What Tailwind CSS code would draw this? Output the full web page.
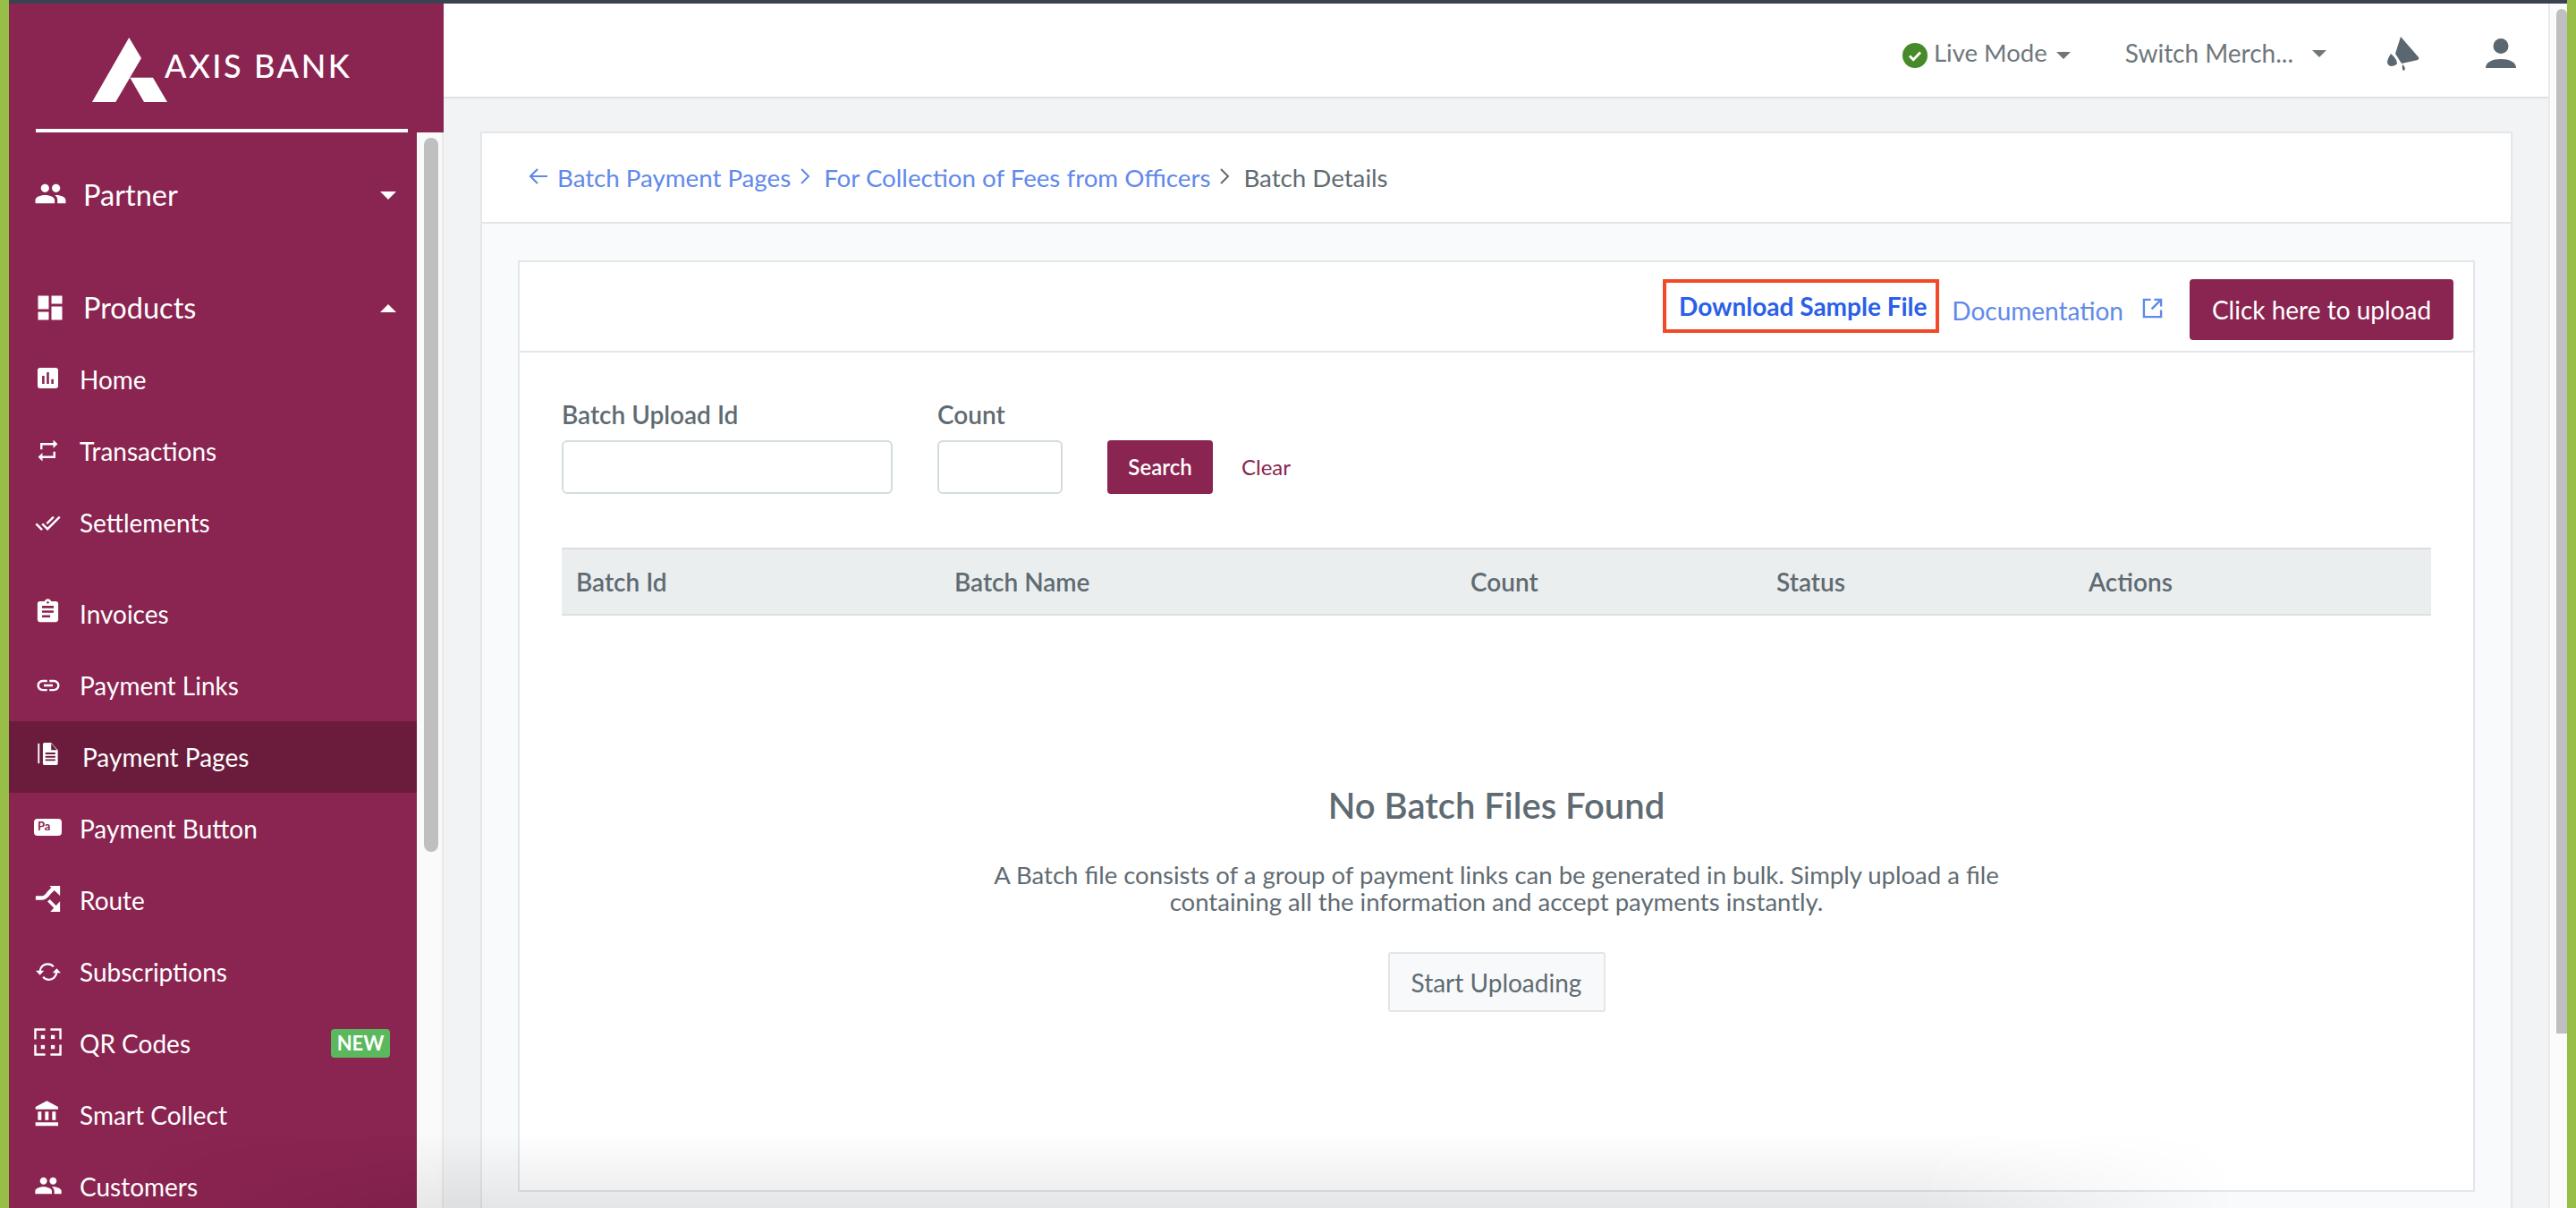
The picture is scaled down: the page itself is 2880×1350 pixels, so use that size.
<!DOCTYPE html>
<html lang="en">
<head>
  <meta charset="UTF-8">
  <title>Batch Details</title>
  <script src="https://cdn.jsdelivr.net/npm/@tailwindcss/browser@4"></script>
</head>
<body class="relative w-[2880px] h-[1350px] overflow-hidden flex bg-[#f1f3f5] font-['Lato',sans-serif] text-[28px] text-[#5f6b72]">
  <div class="w-[10px] shrink-0 bg-[#97bf48]"></div>

  <div class="flex-1 min-w-0 flex flex-col">
    <div class="h-[4px] shrink-0 bg-[#3a4252]"></div>
    <div class="flex-1 min-h-0 flex">

      <!-- sidebar -->
      <aside class="w-[486px] shrink-0 flex flex-col">
        <div class="h-[140px] shrink-0 bg-[#8a2450] flex">
          <svg class="ml-[93px] mt-[38px] w-[90px] h-[76px]" viewBox="0 0 90 76" fill="#fff">
            <polygon points="41.3,0 55,23 26.3,72 0,72"/>
            <polygon points="42.3,44.7 68,44.7 84,72 58,72"/>
          </svg>
          <span class="mt-[47px] -ml-[9px] h-[44px] leading-[44px] text-[36px] font-medium tracking-[2.6px] text-white whitespace-nowrap">AXIS BANK</span>
        </div>
        <div class="h-[4px] shrink-0 bg-[#8a2450] pr-[40px] pl-[30px]"><div class="h-full bg-white"></div></div>
        <div class="flex-1 min-h-0 flex">
          <nav class="w-[456px] shrink-0 bg-[#8a2450] text-white overflow-hidden">
            <a class="mt-[30px] h-[80px] flex items-center pl-[16px] pr-[23px] text-[32.5px]">
              <span class="w-[60px] flex justify-center"><svg class="w-[37px] h-[37px] -mt-[4px]" viewBox="0 0 24 24" fill="#fff"><path d="M16 11c1.66 0 2.99-1.34 2.99-3S17.66 5 16 5c-1.66 0-3 1.34-3 3s1.34 3 3 3zm-8 0c1.66 0 2.99-1.34 2.99-3S9.66 5 8 5C6.34 5 5 6.34 5 8s1.34 3 3 3zm0 2c-2.33 0-7 1.17-7 3.5V19h14v-2.5c0-2.33-4.67-3.5-7-3.5zm8 0c-.29 0-.62.02-.97.05 1.16.84 1.97 1.97 1.97 3.45V19h6v-2.5c0-2.33-4.67-3.5-7-3.5z"/></svg></span>
              <span class="ml-[7px]">Partner</span>
              <span class="ml-auto w-0 h-0 border-x-[9px] border-x-transparent border-t-[9px] border-t-white"></span>
            </a>
            <a class="mt-[46px] h-[80px] flex items-center pl-[16px] pr-[23px] text-[32.5px]">
              <span class="w-[60px] flex justify-center"><svg class="w-[36px] h-[36px]" viewBox="0 0 24 24" fill="#fff"><path d="M3 13h8V3H3v10zm0 8h8v-6H3v6zm10 0h8V11h-8v10zm0-18v6h8V3h-8z"/></svg></span>
              <span class="ml-[7px]">Products</span>
              <span class="ml-auto w-0 h-0 border-x-[9px] border-x-transparent border-b-[9px] border-b-white"></span>
            </a>
            <a class="h-[80px] flex items-center pl-[16px]">
              <span class="w-[55px] flex justify-center"><svg class="w-[23px] h-[23px] -mt-[3px]" viewBox="3 3 18 18" fill="#fff"><path d="M19 3H5c-1.1 0-2 .9-2 2v14c0 1.1.9 2 2 2h14c1.1 0 2-.9 2-2V5c0-1.1-.9-2-2-2zM9 17H7v-7h2v7zm4 0h-2V7h2v10zm4 0h-2v-4h2v4z"/></svg></span>
              <span class="ml-[8px]">Home</span>
            </a>
            <a class="h-[80px] flex items-center pl-[16px]">
              <span class="w-[55px] flex justify-center"><svg class="w-[29px] h-[29px] -mt-[2px]" viewBox="0 0 24 24" fill="#fff"><path d="M7 7h10v3l4-4-4-4v3H5v6h2V7zm10 10H7v-3l-4 4 4 4v-3h12v-6h-2v4z"/></svg></span>
              <span class="ml-[8px]">Transactions</span>
            </a>
            <a class="h-[80px] flex items-center pl-[16px]">
              <span class="w-[55px] flex justify-center"><svg class="w-[29px] h-[29px]" viewBox="0 0 24 24" fill="#fff"><path d="M18 7l-1.41-1.41-6.34 6.34 1.41 1.41L18 7zm4.24-1.41L11.66 16.17 7.48 12l-1.41 1.41L11.66 19l12-12-1.42-1.41zM.41 13.41L6 19l1.41-1.41L1.83 12 .41 13.41z"/></svg></span>
              <span class="ml-[8px]">Settlements</span>
            </a>
            <a class="mt-[22px] h-[80px] flex items-center pl-[16px]">
              <span class="w-[55px] flex justify-center"><svg class="w-[31px] h-[31px] -mt-[6px]" viewBox="0 0 24 24" fill="#fff"><path d="M19 3h-4.18C14.4 1.84 13.3 1 12 1c-1.3 0-2.4.84-2.82 2H5c-1.1 0-2 .9-2 2v14c0 1.1.9 2 2 2h14c1.1 0 2-.9 2-2V5c0-1.1-.9-2-2-2zm-7 0c.55 0 1 .45 1 1s-.45 1-1 1-1-.45-1-1 .45-1 1-1zm2 14H7v-2h7v2zm3-4H7v-2h10v2zm0-4H7V7h10v2z"/></svg></span>
              <span class="ml-[8px]">Invoices</span>
            </a>
            <a class="h-[80px] flex items-center pl-[16px]">
              <span class="w-[55px] flex justify-center"><svg class="w-[30px] h-[30px]" viewBox="0 0 24 24" fill="#fff"><path d="M3.9 12c0-1.71 1.39-3.1 3.1-3.1h4V7H7c-2.76 0-5 2.24-5 5s2.24 5 5 5h4v-1.9H7c-1.71 0-3.1-1.39-3.1-3.1zM8 13h8v-2H8v2zm9-6h-4v1.9h4c1.71 0 3.1 1.39 3.1 3.1s-1.39 3.1-3.1 3.1h-4V17h4c2.76 0 5-2.24 5-5s-2.24-5-5-5z"/></svg></span>
              <span class="ml-[8px]">Payment Links</span>
            </a>
            <a class="h-[80px] flex items-center pl-[16px] bg-[#6b1c3c]">
              <span class="w-[55px] flex justify-center"><svg class="w-[23px] h-[26px] -mt-[8px]" viewBox="0 0 24 28" fill="#fff">
                <rect x="0" y="2" width="2" height="24"/>
                <path fill-rule="evenodd" d="M6 3a2 2 0 0 1 2-2h8l8 9v16a2 2 0 0 1-2 2H8a2 2 0 0 1-2-2zM16 2v8h7zM9 13h12v2H9zM9 17h12v2H9zM9 21h12v2H9z"/>
              </svg></span>
              <span class="ml-[11px]">Payment Pages</span>
            </a>
            <a class="h-[80px] flex items-center pl-[16px]">
              <span class="w-[55px] flex justify-center"><span class="w-[31px] h-[19px] bg-white rounded-[4px] text-[#8a2450] text-[13px] leading-[17px] font-bold pl-[4px] -mt-[3px]">Pa</span></span>
              <span class="ml-[8px]">Payment Button</span>
            </a>
            <a class="h-[80px] flex items-center pl-[16px]">
              <span class="w-[55px] flex justify-center"><svg class="w-[29px] h-[29px] -mt-[3px]" viewBox="0 0 32 32" fill="none" stroke="#fff">
                <path stroke-width="5" d="M1 15h7c5 0 7-3 9-6l6-6"/>
                <path fill="#fff" stroke="none" d="M18 0h13v12z"/>
                <path stroke-width="4" d="M17 18l9 9"/>
                <path fill="#fff" stroke="none" d="M31 19v13H19z"/>
              </svg></span>
              <span class="ml-[8px]">Route</span>
            </a>
            <a class="h-[80px] flex items-center pl-[16px]">
              <span class="w-[55px] flex justify-center"><svg class="w-[30px] h-[30px]" viewBox="0 0 24 24" fill="none" stroke="#fff" stroke-width="1.8">
                <path d="M4.5 11.5C5 7.5 8 5 11.5 5c2.2 0 4 .9 5.2 2.4"/>
                <path d="M19.5 12.5C19 16.5 16 19 12.5 19c-2.2 0-4-.9-5.2-2.4"/>
                <path fill="#fff" stroke="none" d="M.8 11h7.4l-3.7 4zM15.8 13h7.4l-3.7-4z"/>
              </svg></span>
              <span class="ml-[8px]">Subscriptions</span>
            </a>
            <a class="h-[80px] flex items-center pl-[16px] pr-[30px]">
              <span class="w-[55px] flex justify-center"><svg class="w-[31px] h-[31px] -mt-[3px]" viewBox="0 0 32 32" fill="none" stroke="#fff" stroke-width="2.5">
                <path d="M13 1.5H1.5V13M19 1.5h11.5V13M13 30.5H1.5V19M19 30.5h11.5V19"/>
                <rect x="8" y="8" width="4.5" height="4.5" fill="#fff" stroke="none"/>
                <rect x="19.5" y="8" width="4.5" height="4.5" fill="#fff" stroke="none"/>
                <rect x="8" y="19.5" width="4.5" height="4.5" fill="#fff" stroke="none"/>
                <rect x="19.5" y="19.5" width="4.5" height="4.5" fill="#fff" stroke="none"/>
              </svg></span>
              <span class="ml-[8px]">QR Codes</span>
              <span class="ml-auto w-[66px] h-[32px] rounded-[4px] bg-[#5cb85c] text-[22px] leading-[32px] font-bold text-center">NEW</span>
            </a>
            <a class="h-[80px] flex items-center pl-[16px]">
              <span class="w-[55px] flex justify-center"><svg class="w-[32px] h-[32px] -mt-[3px] -ml-[2px]" viewBox="0 0 24 24" fill="#fff"><path d="M4 10v7h3v-7H4zm6 0v7h3v-7h-3zM2 22h19v-3H2v3zm14-12v7h3v-7h-3zm-4.5-9L2 6v2h19V6l-9.5-5z"/></svg></span>
              <span class="ml-[8px]">Smart Collect</span>
            </a>
            <a class="h-[80px] flex items-center pl-[16px]">
              <span class="w-[55px] flex justify-center"><svg class="w-[32px] h-[32px] -mt-[2px]" viewBox="0 0 24 24" fill="#fff"><path d="M16 11c1.66 0 2.99-1.34 2.99-3S17.66 5 16 5c-1.66 0-3 1.34-3 3s1.34 3 3 3zm-8 0c1.66 0 2.99-1.34 2.99-3S9.66 5 8 5C6.34 5 5 6.34 5 8s1.34 3 3 3zm0 2c-2.33 0-7 1.17-7 3.5V19h14v-2.5c0-2.33-4.67-3.5-7-3.5zm8 0c-.29 0-.62.02-.97.05 1.16.84 1.97 1.97 1.97 3.45V19h6v-2.5c0-2.33-4.67-3.5-7-3.5z"/></svg></span>
              <span class="ml-[8px]">Customers</span>
            </a>
          </nav>
          <div class="w-[30px] shrink-0 bg-[#fafafa] border-r-2 border-r-[#e9e9e9] pl-[8px] pt-[6px]">
            <div class="w-[16px] h-[798px] rounded-full bg-[#bfbfbf]"></div>
          </div>
        </div>
      </aside>

      <!-- main -->
      <div class="flex-1 min-w-0 flex flex-col">
        <header class="h-[106px] shrink-0 bg-white border-b-2 border-b-[#dfe2e4] flex items-center pt-[6px] text-[#6f777c]">
          <svg class="ml-[1631px] w-[28px] h-[28px] mt-[6px]" viewBox="0 0 28 28">
            <circle cx="14" cy="14" r="14" fill="#478a2a"/>
            <path d="M8 14.5l4.2 4.2L20 10.5" fill="none" stroke="#fff" stroke-width="2.8"/>
          </svg>
          <span class="ml-[7px] text-[27.5px]">Live Mode</span>
          <span class="ml-[10px] mt-[6px] w-0 h-0 border-x-[8px] border-x-transparent border-t-[8px] border-t-[#6f777c]"></span>
          <span class="ml-[61px]">Switch Merch...</span>
          <span class="ml-[21px] mt-[1px] w-0 h-0 border-x-[8px] border-x-transparent border-t-[8px] border-t-[#6f777c]"></span>
          <svg class="ml-[66px] w-[40px] h-[40px]" viewBox="0 0 40 40" fill="#5b6770">
            <path d="M17 2L37 25q1 2-1 3L18 32L11 21z"/>
            <path d="M6 21q-4 6-4 10q1 4 5 4q5-1 6-3q0-5-7-11z"/>
            <path d="M19 33q3 2 3 5q-1 2-2 2q-2-2-1-7z"/>
          </svg>
          <svg class="ml-[72px] w-[34px] h-[33px]" viewBox="0 0 34 33" fill="#5b6770">
            <circle cx="17" cy="8.5" r="8.5"/>
            <path d="M0 33c0-7 8-10 17-10s17 3 17 10z"/>
          </svg>
        </header>

        <main class="flex-1 min-h-0 pt-[37px] pl-[41px] pr-[40px] overflow-hidden">
          <div class="border-2 border-[#e3e7ea] border-b-0 bg-[#f8fafb] h-[1204px]">
            <div class="h-[101px] bg-white border-b-2 border-b-[#e3e7ea] pl-[51px] flex items-center text-[27.7px] text-[#6189ea]">
              <svg class="w-[24px] h-[24px] -mt-[3px]" viewBox="0 0 24 24" fill="none" stroke="#6189ea" stroke-width="2.2"><path d="M22 12H3M11 4l-8 8 8 8"/></svg>
              <span class="ml-[9px]">Batch Payment Pages</span>
              <svg class="ml-[10px] w-[12px] h-[18px] -mt-[4px]" viewBox="0 0 12 18" fill="none" stroke="#6189ea" stroke-width="2"><path d="M2 1l8 8-8 8"/></svg>
              <span class="ml-[15px]">For Collection of Fees from Officers</span>
              <svg class="ml-[10px] w-[12px] h-[18px] -mt-[4px]" viewBox="0 0 12 18" fill="none" stroke="#5f6b72" stroke-width="2"><path d="M2 1l8 8-8 8"/></svg>
              <span class="ml-[15px] text-[#5f6b72]">Batch Details</span>
            </div>

            <div class="mt-[41px] mx-[40px] border-2 border-[#e3e7ea] bg-white h-[1041px]">
              <div class="h-[101px] border-b-2 border-b-[#e3e7ea] flex items-center justify-end pr-[22px]">
                <a class="w-[309px] h-[60px] -mt-[2px] border-[4px] border-[#f04a26] pl-[4px] flex items-center justify-center font-bold text-[#2a5fe8] whitespace-nowrap">Download Sample File</a>
                <a class="ml-[14px] mt-[8px] text-[#6189ea]">Documentation</a>
                <svg class="ml-[21px] mt-[4px] w-[23px] h-[23px]" viewBox="0 0 24 24" fill="none" stroke="#6189ea" stroke-width="2.5"><path d="M10 2H2v20h20v-8M14 2h8v8M22 2L11 13"/></svg>
                <button class="ml-[30px] mt-[6px] w-[295px] h-[68px] rounded-[4px] bg-[#8a2450] text-white">Click here to upload</button>
              </div>

              <div class="pl-[47px] pr-[47px]">
                <div class="mt-[52px] flex items-end">
                  <label class="block">
                    <span class="block font-semibold leading-[34px] mb-[12px]">Batch Upload Id</span>
                    <input class="block w-[370px] h-[60px] border-2 border-[#d3dcde] rounded-[6px] bg-white">
                  </label>
                  <label class="block ml-[50px]">
                    <span class="block font-semibold leading-[34px] mb-[12px]">Count</span>
                    <input class="block w-[140px] h-[60px] border-2 border-[#d3dcde] rounded-[6px] bg-white">
                  </label>
                  <button class="ml-[50px] w-[118px] h-[60px] rounded-[4px] bg-[#8a2450] text-white text-[24px] font-semibold">Search</button>
                  <a class="ml-[32px] h-[60px] leading-[60px] text-[24px] text-[#8a2450]">Clear</a>
                </div>

                <div class="mt-[60px] h-[76px] bg-[#ebeeef] border-y-2 border-y-[#dcdfe0] grid grid-cols-[423px_577px_342px_349px_1fr] items-center pl-[16px] font-semibold">
                  <span>Batch Id</span>
                  <span>Batch Name</span>
                  <span>Count</span>
                  <span>Status</span>
                  <span>Actions</span>
                </div>

                <div class="mt-[186px] flex flex-col items-center text-center">
                  <h2 class="text-[40px] leading-[52px] font-semibold">No Batch Files Found</h2>
                  <p class="mt-[37px] text-[27.5px] leading-[30px] w-[1200px]">A Batch file consists of a group of payment links can be generated in bulk. Simply upload a file<br>containing all the information and accept payments instantly.</p>
                  <button class="mt-[41px] w-[243px] h-[67px] border-2 border-[#e2e6e9] rounded-[3px] bg-[#f8f9fa]">Start Uploading</button>
                </div>
              </div>
            </div>
          </div>
        </main>
      </div>

      <!-- page scrollbar -->
      <div class="w-[21px] shrink-0 bg-[#fbfbfb] border-l-2 border-l-[#e9e9e9] pl-[7px] pt-[6px]">
        <div class="w-[12px] h-[1145px] rounded-t-full rounded-bl-[10px] bg-[#bfbfbf]"></div>
      </div>
    </div>
  </div>

  <div class="w-[10px] shrink-0 bg-[#97bf48]"></div>

  <!-- soft shadow that fades in over the bottom edge -->
  <div class="absolute left-[150px] bottom-0 w-[2350px] h-[85px] pointer-events-none bg-linear-to-b from-transparent to-black/8 [mask-image:linear-gradient(to_right,transparent,black_15%,black_85%,transparent)]"></div>
</body>
</html>
